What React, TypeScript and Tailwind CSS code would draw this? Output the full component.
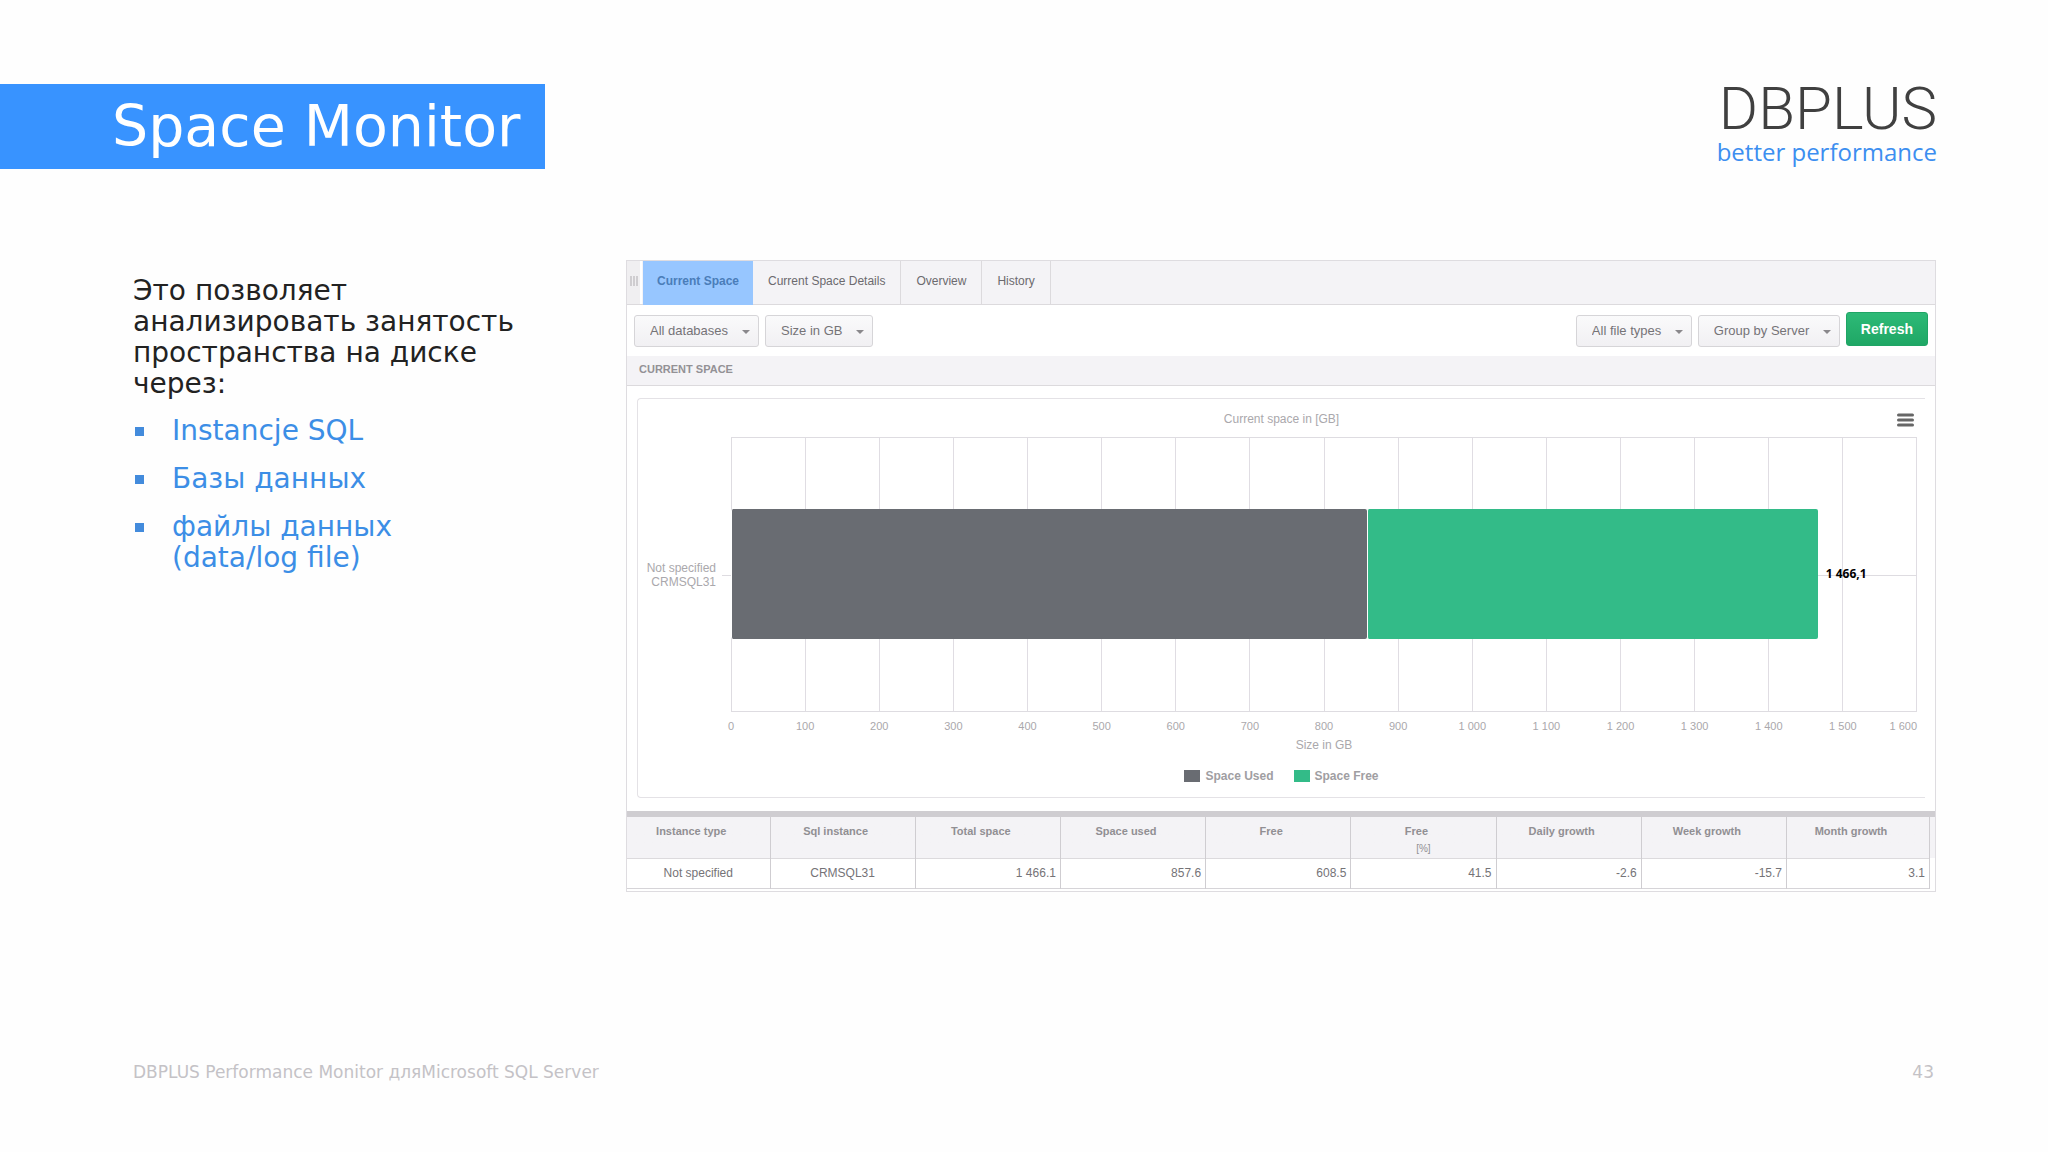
import clsx from "clsx";

const tabs = ["Current Space", "Current Space Details", "Overview", "History"];

const ticks = [
  "0",
  "100",
  "200",
  "300",
  "400",
  "500",
  "600",
  "700",
  "800",
  "900",
  "1 000",
  "1 100",
  "1 200",
  "1 300",
  "1 400",
  "1 500",
  "1 600",
];

const AXIS_MAX = 1600;

const series = [
  { label: "Space Used", value: 857.6, css: "bg-[#696c72]" },
  { label: "Space Free", value: 608.5, css: "bg-[#33bb88]" },
];

const columns = [
  { label: "Instance type", value: "Not specified", text: true },
  { label: "Sql instance", value: "CRMSQL31", text: true },
  { label: "Total space", value: "1 466.1" },
  { label: "Space used", value: "857.6" },
  { label: "Free", value: "608.5" },
  { label: "Free", unit: "[%]", value: "41.5" },
  { label: "Daily growth", value: "-2.6" },
  { label: "Week growth", value: "-15.7" },
  { label: "Month growth", value: "3.1" },
];

const Logo = () => {
  return (
    <div className="flex flex-col items-end pt-[3px]">
      <span className="font-[Roboto] text-[60px] leading-[44px] font-light text-[#404040]">
        DBPLUS
      </span>
      <span className="mt-[5px] font-['Open_Sans'] text-[24px] leading-8 text-[#3c8ef0]">
        better performance
      </span>
    </div>
  );
};

const SlideHeader = () => {
  return (
    <header className="flex items-start justify-between pt-[84px] pr-[111px]">
      <h1 className="bg-[#3893ff] pr-6 pl-[112px] text-[57px] leading-[85px] text-white">
        Space Monitor
      </h1>
      <Logo />
    </header>
  );
};

const Description = () => {
  return (
    <section className="w-[626px] shrink-0 pt-[15px] pl-[133px] text-[28px] leading-[31px] text-[#222]">
      <p>
        Это позволяет
        <br />
        анализировать занятость
        <br />
        пространства на диске
        <br />
        через:
      </p>
      <ul className="mt-4 flex flex-col gap-[17px] text-[#3c8ee6]">
        {["Instancje SQL", "Базы данных", "файлы данных (data/log file)"].map((item) => (
          <li className="flex" key={item}>
            <span className="mt-3 mr-7 ml-[2px] size-[9px] shrink-0 bg-[#438bdc]" />
            <span className="w-[240px]">{item}</span>
          </li>
        ))}
      </ul>
    </section>
  );
};

const Tabs = () => {
  return (
    <nav className="flex h-11 border-b border-[#dcdadd] bg-[#f4f3f6]">
      <div className="mr-px flex w-[15px] items-center justify-center gap-px border-r-2 border-white bg-[#f0eff1] pb-1">
        {[0, 1, 2].map((i) => (
          <span className="h-[10px] w-[2px] bg-[#cfcdd0]" key={i} />
        ))}
      </div>
      {tabs.map((tab, i) => (
        <button
          type="button"
          key={tab}
          className={clsx(
            i === 0
              ? "-mb-px bg-[#97c6ff] px-[14px] pb-[5px] font-bold text-[#4a7db9]"
              : "border-r border-[#dcdadd] px-[15px] pb-[3px] text-[#6c6a6e]",
          )}
        >
          {tab}
        </button>
      ))}
    </nav>
  );
};

const Dropdown = ({ label, value }: { label: string; value: string }) => {
  return (
    <label className="relative flex">
      <select
        aria-label={label}
        className="h-8 appearance-none rounded-[3px] border border-[#d6d5d8] bg-linear-to-b from-[#fafafb] to-[#f1f0f3] pr-[29px] pl-[15px] text-[13px] text-[#757377]"
      >
        <option>{value}</option>
      </select>
      <svg
        className="pointer-events-none absolute top-[15px] right-[9px] text-[#8a888c]"
        width="8"
        height="4"
        viewBox="0 0 8 4"
        fill="currentColor"
      >
        <path d="M0 0h8L4 4z" />
      </svg>
    </label>
  );
};

const Toolbar = () => {
  return (
    <div className="flex h-[51px] items-center gap-[6px] px-[7px]">
      <Dropdown label="Databases" value="All databases" />
      <Dropdown label="Unit" value="Size in GB" />
      <div className="ml-auto flex items-center gap-[6px]">
        <Dropdown label="File types" value="All file types" />
        <Dropdown label="Group" value="Group by Server" />
        <button
          type="button"
          className="mb-[3px] h-[34px] rounded-[3px] border border-[#1fa565] bg-linear-to-b from-[#2dba77] to-[#1fa765] px-[14px] text-[14px] font-bold text-white"
        >
          Refresh
        </button>
      </div>
    </div>
  );
};

const Plot = () => {
  return (
    <div className="relative h-[275px]">
      <div className="grid h-full grid-cols-[repeat(16,minmax(0,1fr))] border border-r-0 border-[#dedce1]">
        {ticks.slice(1).map((tick) => (
          <div className="border-r border-[#e0dde3]" key={tick} />
        ))}
      </div>
      <div className="absolute top-1/2 right-0 -left-[9px] border-t border-[#dedce1]" />
      <div className="absolute inset-x-0 top-[72px] flex h-[130px] items-center">
        {series.map((s) => (
          <div
            key={s.label}
            className={clsx("h-full rounded-[2px] border-l border-white", s.css)}
            style={{ width: `${(s.value / AXIS_MAX) * 100}%` }}
          />
        ))}
        <span className="ml-2 font-['Open_Sans'] text-[12px] leading-4 font-bold text-black">
          1 466,1
        </span>
      </div>
    </div>
  );
};

const Chart = () => {
  return (
    <div className="mt-3 mr-[10px] ml-[10px] flex h-[400px] flex-col rounded-l-[4px] border border-r-0 border-[#e4e2e6] text-[12px] text-[#aaa8ac]">
      <div className="relative flex h-[38px] items-center justify-center pt-[2px]">
        <h3>Current space in [GB]</h3>
        <button type="button" aria-label="Chart menu" className="absolute top-[14px] right-[11px]">
          <svg width="17" height="14" viewBox="0 0 17 14" stroke="#666" strokeWidth="3" strokeLinecap="round">
            <path d="M1.5 2h14M1.5 7h14M1.5 12h14" />
          </svg>
        </button>
      </div>
      <div className="flex pr-2">
        <div className="flex w-[93px] items-center justify-end pr-[15px] text-right leading-[14px]">
          Not specified
          <br />
          CRMSQL31
        </div>
        <div className="min-w-0 flex-1">
          <Plot />
        </div>
      </div>
      <div className="mr-2 ml-[93px] flex justify-between pt-[7px] text-[11px] leading-[14px]">
        {ticks.map((tick, i) => (
          <span
            className={clsx(
              "flex w-0 whitespace-nowrap",
              i === ticks.length - 1 ? "justify-end" : "justify-center",
            )}
            key={tick}
          >
            {tick}
          </span>
        ))}
      </div>
      <p className="mt-[5px] mr-2 ml-[93px] text-center leading-[14px]">Size in GB</p>
      <div className="mt-[17px] flex justify-center gap-5 leading-[14px] font-bold text-[#a09ea2]">
        {series.map((s) => (
          <div className="flex items-center gap-[5px]" key={s.label}>
            <span className={clsx("h-3 w-4", s.css)} />
            {s.label}
          </div>
        ))}
      </div>
    </div>
  );
};

const SpaceTable = () => {
  return (
    <div className="mt-[13px] border-t-[6px] border-[#cfcdd1] bg-linear-to-b from-[#f4f3f6] from-[41px] to-transparent to-[41px] pr-[5px] pb-[2px]">
      <table className="w-full table-fixed border-collapse">
        <thead>
          <tr className="h-[41px] border-b border-[#dcdadd] text-[11px] leading-[14px] text-[#918f93]">
            {columns.map((col, i) => (
              <th
                className="border-r border-[#cfcdd1] px-0 pt-[7px] align-top font-bold first:w-[143px] last:w-[143px]"
                key={i}
              >
                <span className="block pr-[14px]">{col.label}</span>
                {col.unit && <span className="mt-1 block text-[10px] font-normal">{col.unit}</span>}
              </th>
            ))}
          </tr>
        </thead>
        <tbody>
          <tr className="h-[30px] border-b border-[#d6d4d8] text-[#757377]">
            {columns.map((col, i) => (
              <td
                className={clsx(
                  "border-r border-[#cfcdd1] p-0",
                  col.text ? "text-center" : "pr-1 text-right",
                )}
                key={i}
              >
                {col.value}
              </td>
            ))}
          </tr>
        </tbody>
      </table>
    </div>
  );
};

const SpacePanel = () => {
  return (
    <section className="min-w-0 flex-1 border border-[#dedce0] bg-white font-['Liberation_Sans',sans-serif] text-[12px]">
      <Tabs />
      <Toolbar />
      <h2 className="h-[30px] border-b border-[#dcdadd] bg-[#f4f3f6] pt-[5px] pl-3 text-[11px] leading-4 font-bold text-[#939195]">
        CURRENT SPACE
      </h2>
      <Chart />
      <SpaceTable />
    </section>
  );
};

const App = () => {
  return (
    <main className="flex min-h-screen flex-col bg-[#fefefe] font-['DejaVu_Sans',sans-serif]">
      <SlideHeader />
      <div className="mt-[91px] flex items-start pr-[112px]">
        <Description />
        <SpacePanel />
      </div>
      <footer className="mt-auto flex justify-between pr-[114px] pb-[68px] pl-[133px] text-[17px] leading-6 text-[#c4c2c6]">
        <span>DBPLUS Performance Monitor дляMicrosoft SQL Server</span>
        <span>43</span>
      </footer>
    </main>
  );
};

export default App;
